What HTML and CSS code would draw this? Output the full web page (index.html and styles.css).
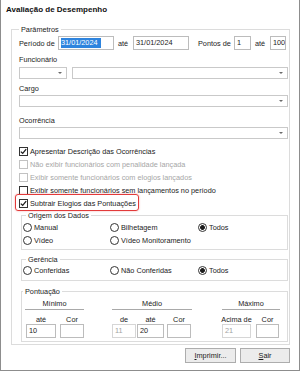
FILE: index.html
```html
<!DOCTYPE html>
<html lang="pt-BR">
<head>
    <meta charset="UTF-8">
    <meta name="viewport" content="width=device-width, initial-scale=1.0">
    <title>Avaliação de Desempenho</title>
    <link rel="stylesheet" href="styles.css">
</head>
<body>
<div class="window">
    <div class="window-title">Avaliação de Desempenho</div>

    <fieldset class="group params">
        <legend>Parâmetros</legend>

        <div class="period-row">
            <span class="period-label">Período de</span>
            <div class="edit date"><span class="selected">31/01/2024</span></div>
            <span class="sep">até</span>
            <div class="edit date">31/01/2024</div>
            <span class="points-label">Pontos de</span>
            <div class="edit points">1</div>
            <span class="sep">até</span>
            <div class="edit points last">100</div>
        </div>

        <div class="field-label lbl-func">Funcionário</div>
        <div class="combo-row">
            <div class="combo small"></div>
            <div class="combo wide"></div>
        </div>

        <div class="field-label lbl-cargo">Cargo</div>
        <div class="combo full"></div>

        <div class="field-label lbl-ocor">Ocorrência</div>
        <div class="combo full"></div>

        <div class="checks">
            <div class="check">
                <span class="box"><svg width="7" height="7" viewBox="0 0 7 7"><path d="M0.8 3.6 L2.7 5.4 L6.2 1.2" fill="none" stroke="#1d1d1d" stroke-width="1.3"/></svg></span>
                <span>Apresentar Descrição das Ocorrências</span>
            </div>
            <div class="check disabled">
                <span class="box"></span>
                <span>Não exibir funcionários com penalidade lançada</span>
            </div>
            <div class="check disabled">
                <span class="box"></span>
                <span>Exibir somente funcionários com elogios lançados</span>
            </div>
            <div class="check">
                <span class="box"></span>
                <span>Exibir somente funcionários sem lançamentos no período</span>
            </div>
            <div class="check highlight">
                <span class="box"><svg width="7" height="7" viewBox="0 0 7 7"><path d="M0.8 3.6 L2.7 5.4 L6.2 1.2" fill="none" stroke="#1d1d1d" stroke-width="1.3"/></svg></span>
                <span>Subtrair Elogios das Pontuações</span>
            </div>
        </div>

        <fieldset class="group sub origin">
            <legend>Origem dos Dados</legend>
            <div class="radio-grid">
                <div class="radio"><span class="dot"></span>Manual</div>
                <div class="radio"><span class="dot"></span>Bilhetagem</div>
                <div class="radio on"><span class="dot"></span>Todos</div>
                <div class="radio"><span class="dot"></span>Vídeo</div>
                <div class="radio"><span class="dot"></span>Vídeo Monitoramento</div>
            </div>
        </fieldset>

        <fieldset class="group sub manager">
            <legend>Gerência</legend>
            <div class="radio-grid">
                <div class="radio"><span class="dot"></span>Conferidas</div>
                <div class="radio"><span class="dot"></span>Não Conferidas</div>
                <div class="radio on"><span class="dot"></span>Todos</div>
            </div>
        </fieldset>

        <fieldset class="group sub score">
            <legend>Pontuação</legend>
            <div class="score-row">
                <div class="score-col col-min">
                    <div class="score-head">Mínimo</div>
                    <div class="score-fields">
                        <div class="score-field min-ate"><span>até</span><div class="edit">10</div></div>
                        <div class="score-field min-cor"><span>Cor</span><div class="edit"></div></div>
                    </div>
                </div>
                <div class="score-col col-med">
                    <div class="score-head">Médio</div>
                    <div class="score-fields">
                        <div class="score-field med-de"><span>de</span><div class="edit off">11</div></div>
                        <div class="score-field med-ate"><span>até</span><div class="edit">20</div></div>
                        <div class="score-field med-cor"><span>Cor</span><div class="edit"></div></div>
                    </div>
                </div>
                <div class="score-col col-max">
                    <div class="score-head">Máximo</div>
                    <div class="score-fields">
                        <div class="score-field max-acima"><span>Acima de</span><div class="edit off">21</div></div>
                        <div class="score-field max-cor"><span>Cor</span><div class="edit"></div></div>
                    </div>
                </div>
            </div>
        </fieldset>
    </fieldset>

    <div class="buttons">
        <button class="btn btn-print"><u>I</u>mprimir...</button>
        <button class="btn btn-exit"><u>S</u>air</button>
    </div>
</div>
</body>
</html>
```

FILE: styles.css
```css
* {
    box-sizing: border-box;
}
body {
    margin: 0;
    background-color: #fff;
    font-family: "Liberation Sans", Arial, sans-serif;
    font-size: 7.3px;
    color: #1b1b1b;
}
.window {
    width: 300px;
    height: 371px;
    border: 1px solid #8d8d8d;
    border-top: none;
}
.window-title {
    height: 25px;
    padding-left: 5px;
    line-height: 20px;
    font-size: 8px;
    font-weight: bold;
    color: #111;
}

/* group boxes */
.group {
    margin: 0;
    padding: 0;
    min-width: 0;
    border: 1px solid #dcdcdc;
}
.group legend {
    padding: 0 2px;
    height: 9px;
    line-height: 9px;
}
.params {
    width: 279px;
    margin-left: 10px;
    padding: 2px 1px 2px 7px;
}
.sub {
    margin-left: 2px;
}
.sub legend {
    margin-left: 3px;
}
.origin {
    margin-top: 1px;
    padding: 1px 0 2px 1px;
}
.manager {
    margin-top: 5px;
    padding: 0 0 3px 1px;
}
.score {
    margin-top: 6px;
    padding: 3px 0 3px 3px;
}
.score legend {
    margin-left: -2px;
}

/* edits */
.edit {
    height: 14px;
    border: 1px solid #bcbcbc;
    background-color: #fff;
    padding-left: 2px;
    line-height: 12px;
    overflow: hidden;
    white-space: nowrap;
}
.edit.off {
    color: #a3a3a3;
    border-color: #d6d6d6;
}
.selected {
    display: inline-block;
    background-color: #2e84de;
    color: #fff;
    line-height: 10px;
    padding-right: 3px;
}

.period-row {
    display: flex;
    align-items: center;
    height: 14px;
    white-space: nowrap;
}
.period-label {
    width: 39px;
}
.date {
    width: 56px;
}
.sep {
    width: 15px;
    margin-left: 4px;
}
.points-label {
    width: 36px;
    margin-left: 9px;
}
.points {
    width: 17px;
}
.points.last {
    width: 16px;
}

.field-label {
    line-height: 10px;
}
.lbl-func { margin-top: 5px; }
.lbl-cargo { margin-top: 5px; }
.lbl-ocor { margin-top: 9px; }

.combo-row {
    display: flex;
    margin-top: 2px;
}
.combo {
    height: 12px;
    border: 1px solid #c9c9c9;
    background-color: #fff;
    display: flex;
    justify-content: flex-end;
    align-items: center;
    padding-right: 4px;
}
.combo::after {
    content: "";
    border-left: 2px solid transparent;
    border-right: 2px solid transparent;
    border-top: 2px solid #6a6a6a;
}
.combo.small {
    width: 48px;
}
.combo.wide {
    flex: 1;
    margin-left: 5px;
}
.combo.full {
    margin-top: 1px;
}

/* checkboxes */
.checks {
    margin-top: 6px;
}
.check {
    display: flex;
    align-items: center;
    height: 13px;
    white-space: nowrap;
}
.check .box {
    width: 9px;
    height: 9px;
    margin-right: 2px;
    border: 1px solid #333;
    background-color: #fff;
    display: flex;
    align-items: center;
    justify-content: center;
}
.check.disabled {
    color: #a6a6a6;
}
.check.disabled .box {
    border-color: #c2c2c2;
}
.check.highlight {
    position: relative;
    width: max-content;
}
.check.highlight::after {
    content: "";
    position: absolute;
    left: -4px;
    right: -3px;
    top: -3px;
    bottom: -1px;
    border: 1.5px solid #e23a3a;
    border-radius: 3px;
    box-shadow: 0 0 2px rgba(226, 58, 58, 0.45);
}

/* radios */
.radio-grid {
    display: grid;
    grid-template-columns: 87px 88px 1fr;
    grid-auto-rows: 13px;
    align-items: center;
    white-space: nowrap;
}
.radio {
    display: flex;
    align-items: center;
}
.radio .dot {
    width: 9px;
    height: 9px;
    margin-right: 2px;
    border: 1px solid #333;
    border-radius: 50%;
    background-color: #fff;
}
.radio.on .dot {
    background: radial-gradient(circle, #1d1d1d 0 2.1px, #fff 2.6px);
}

/* pontuação */
.score-row {
    display: flex;
}
.score-col {
    display: flex;
    flex-direction: column;
}
.col-min { width: 59px; }
.col-med { width: 80px; margin-left: 28px; }
.col-max { width: 58px; margin-left: 30px; }
.score-head {
    height: 11px;
    line-height: 10px;
    text-align: center;
    border-bottom: 1px solid #a9a9a9;
}
.score-fields {
    display: flex;
}
.score-field {
    display: flex;
    flex-direction: column;
    align-items: center;
    white-space: nowrap;
}
.score-field span {
    margin-top: 5px;
    line-height: 9px;
}
.score-field .edit {
    width: 100%;
}
.min-ate { width: 30px; margin-left: 1px; }
.min-cor { width: 24px; margin-left: 4px; }
.med-de { width: 24px; }
.med-ate { width: 27px; margin-left: 1px; }
.med-cor { width: 24px; margin-left: 3px; }
.max-acima { width: 29px; }
.max-cor { width: 23px; margin-left: 5px; }

/* buttons */
.buttons {
    display: flex;
    justify-content: flex-end;
    gap: 4px;
    margin-top: 3px;
    padding-right: 9px;
}
.btn {
    height: 15px;
    padding: 0;
    border: 1px solid #adadad;
    background-color: #ececec;
    font-family: inherit;
    font-size: 7.3px;
    color: #1b1b1b;
    line-height: 13px;
}
.btn-print { width: 51px; }
.btn-exit { width: 50px; }
```
